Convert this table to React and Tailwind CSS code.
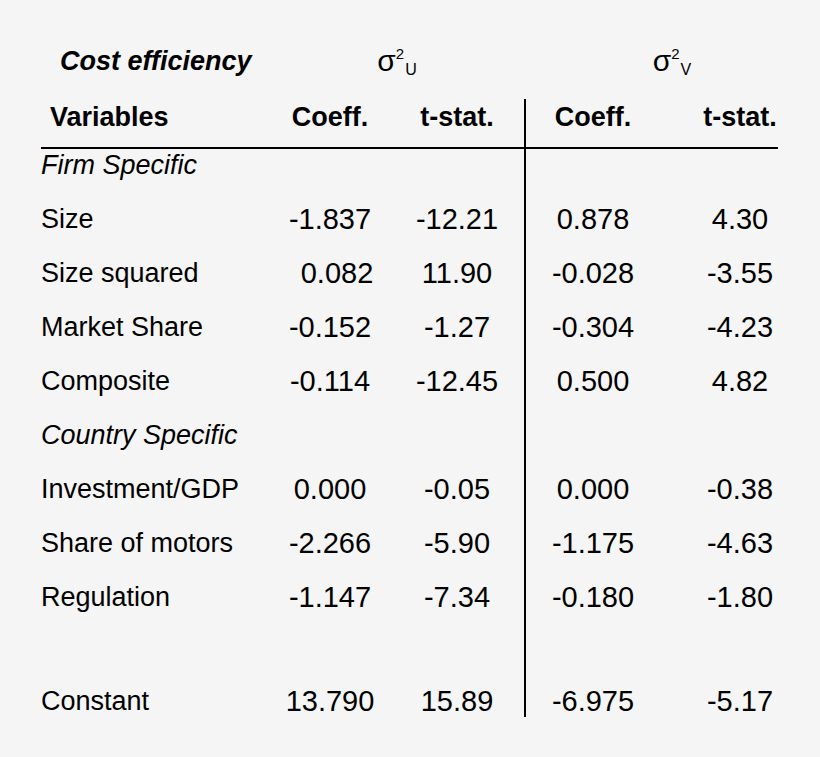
// Cost efficiency regression table
const COLS = "grid grid-cols-[41px_229px_120px_134px_136px_160px]";

const ROWS = [
  { label: "Size", v: ["-1.837", "-12.21", "0.878", "4.30"] },
  { label: "Size squared", v: ["0.082", "11.90", "-0.028", "-3.55"], shift: "pl-[14px]" },
  { label: "Market Share", v: ["-0.152", "-1.27", "-0.304", "-4.23"] },
  { label: "Composite", v: ["-0.114", "-12.45", "0.500", "4.82"] },
  { label: "Country Specific", italic: true },
  { label: "Investment/GDP", v: ["0.000", "-0.05", "0.000", "-0.38"] },
  { label: "Share of motors", v: ["-2.266", "-5.90", "-1.175", "-4.63"] },
  { label: "Regulation", v: ["-1.147", "-7.34", "-0.180", "-1.80"] },
];

function Sigma({ sub }) {
  return (
    <span className="font-normal whitespace-nowrap text-[30px]">
      σ
      <sup className="relative top-[-12px] text-[15px]">2</sup>
      <sub className="relative bottom-[-4px] ml-[1px] text-[16px]">{sub}</sub>
    </span>
  );
}

function DataRow({ label, v = [], italic, shift, h = "h-[54px]", pad = "leading-[54px]" }) {
  const num = `text-[29px] whitespace-nowrap text-center ${pad}`;
  return (
    <div className={`${COLS} ${h}`}>
      <div />
      <div className={`whitespace-nowrap ${pad} ${italic ? "italic" : ""}`}>{label}</div>
      <div className={`${num} ${shift || ""}`}>{v[0]}</div>
      <div className={num}>{v[1]}</div>
      <div className={`${num} border-l-2 border-black`}>{v[2]}</div>
      <div className={num}>{v[3]}</div>
    </div>
  );
}

export default function App() {
  return (
    <div className="w-[820px] h-[757px] bg-[#f5f5f5] text-black font-['Liberation_Sans',Arial,sans-serif] text-[27px] overflow-hidden">
      {/* title row */}
      <div className="grid grid-cols-[41px_229px_254px_296px] h-[99px] pt-[46px] leading-[30px] font-bold">
        <div />
        <div className="pl-[19px] italic whitespace-nowrap">Cost efficiency</div>
        <div className="text-center"><Sigma sub="U" /></div>
        <div className="text-center"><Sigma sub="V" /></div>
      </div>

      {/* column header */}
      <div className={`${COLS} h-[48px] leading-[30px] font-bold`}>
        <div />
        <div className="pl-[9px] pt-[3px]">Variables</div>
        <div className="pt-[3px] text-center">Coeff.</div>
        <div className="pt-[3px] text-center">t-stat.</div>
        <div className="pt-[3px] border-l-2 border-black text-center">Coeff.</div>
        <div className="pt-[3px] text-center">t-stat.</div>
      </div>

      <div className="ml-[41px] h-[2px] w-[737px] bg-black" />

      <DataRow label="Firm Specific" italic h="h-[43px]" pad="pt-[1px] leading-[30px]" />
      {ROWS.map((r) => (
        <DataRow key={r.label} {...r} />
      ))}
      <DataRow label="" h="h-[51px]" />
      <DataRow
        label="Constant"
        v={["13.790", "15.89", "-6.975", "-5.17"]}
        h="h-[42px]"
        pad="pt-[11px] leading-[30px]"
      />
    </div>
  );
}
